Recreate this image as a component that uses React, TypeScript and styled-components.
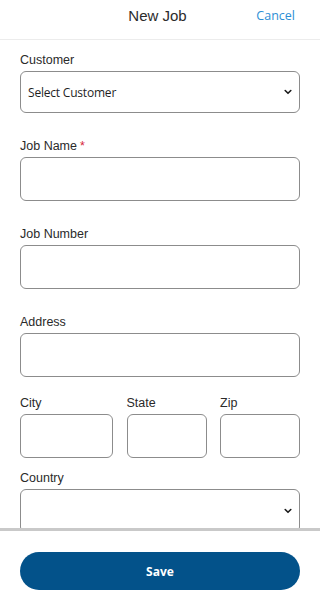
import React from 'react'
import styled, { createGlobalStyle } from 'styled-components'

const GlobalStyle = createGlobalStyle`
    html, body {
        margin: 0;
        padding: 0;
        background: #ffffff;
    }
    body {
        font-family: "Liberation Sans", Arial, sans-serif;
        color: #222;
    }
    * { box-sizing: border-box; }
`

const Page = styled.div`
    width: 320px;
    height: 600px;
    display: flex;
    flex-direction: column;
    background: #fff;
    overflow: hidden;
`

const Header = styled.div`
    height: 40px;
    flex: none;
    display: grid;
    grid-template-columns: 1fr auto 1fr;
    align-items: center;
    padding: 0 25px 8px 20px;
    border-bottom: 1px solid #ececec;
`

const Title = styled.div`
    grid-column: 2;
    font-size: 15px;
    color: #2b2b2b;
`

const CancelButton = styled.button`
    justify-self: end;
    border: none;
    background: none;
    padding: 0;
    font-family: "Open Sans", "Noto Sans", sans-serif;
    font-size: 12.5px;
    color: #2d8fd5;
`

const Scroll = styled.div`
    flex: 1;
    overflow: hidden;
    padding: 12px 20px 0;
`

const Field = styled.div<{ $gap: number }>`
    display: flex;
    flex-direction: column;
    margin-bottom: ${p => p.$gap}px;
`

const Label = styled.label`
    font-size: 12.5px;
    line-height: 16px;
    color: #2a2a2a;
    margin-bottom: 3px;
`

const Required = styled.span`
    color: #d6263a;
    margin-left: 3px;
`

const Input = styled.div<{ $h?: number }>`
    height: ${p => p.$h ?? 44}px;
    border: 1px solid #8c8c8c;
    border-radius: 6px;
    background: #fff;
`

const Select = styled.div<{ $h?: number }>`
    height: ${p => p.$h ?? 42}px;
    border: 1px solid #8c8c8c;
    border-radius: 6px;
    display: flex;
    align-items: center;
    justify-content: space-between;
    padding: 0 7px 0 7px;
    font-family: "Open Sans", "Noto Sans", sans-serif;
    font-size: 12px;
    font-weight: 500;
    letter-spacing: -0.2px;
    color: #1f1f1f;
`

const Row = styled.div`
    display: grid;
    grid-template-columns: 93px 80px 80px;
    justify-content: space-between;
    margin-bottom: 12px;
`

const Footer = styled.div`
    flex: none;
    border-top: 3px solid #c9c9c9;
    padding: 21px 20px 0;
    height: 72px;
`

const SaveButton = styled.button`
    width: 100%;
    height: 38px;
    border: none;
    border-radius: 19px;
    background: #03528a;
    color: #fff;
    font-family: "Open Sans", "Noto Sans", sans-serif;
    font-size: 12px;
    font-weight: 700;
`

const Chevron = () => (
    <svg width="8" height="6" viewBox="0 0 8 6" fill="none">
        <path d="M1.2 1.5 L4 4.3 L6.8 1.5" stroke="#1a1a1a" strokeWidth="1.6" strokeLinecap="round" strokeLinejoin="round" />
    </svg>
)

export default function App() {
    return <Page>
        <GlobalStyle />
        <Header>
            <Title>New Job</Title>
            <CancelButton>Cancel</CancelButton>
        </Header>
        <Scroll>
            <Field $gap={25}>
                <Label>Customer</Label>
                <Select>
                    <span>Select Customer</span>
                    <Chevron />
                </Select>
            </Field>
            <Field $gap={25}>
                <Label>Job Name<Required>*</Required></Label>
                <Input />
            </Field>
            <Field $gap={25}>
                <Label>Job Number</Label>
                <Input />
            </Field>
            <Field $gap={18}>
                <Label>Address</Label>
                <Input />
            </Field>
            <Row>
                <Field $gap={0}>
                    <Label>City</Label>
                    <Input />
                </Field>
                <Field $gap={0}>
                    <Label>State</Label>
                    <Input />
                </Field>
                <Field $gap={0}>
                    <Label>Zip</Label>
                    <Input />
                </Field>
            </Row>
            <Field $gap={0}>
                <Label>Country</Label>
                <Select $h={44}>
                    <span />
                    <Chevron />
                </Select>
            </Field>
        </Scroll>
        <Footer>
            <SaveButton>Save</SaveButton>
        </Footer>
    </Page>
}
